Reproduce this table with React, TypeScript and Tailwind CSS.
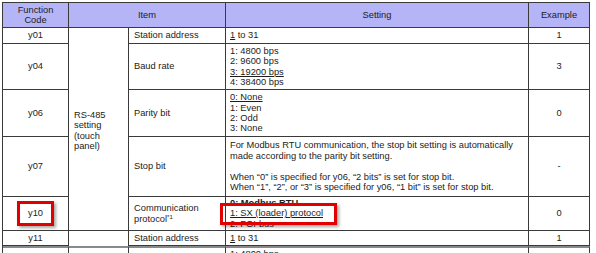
import React from "react";

// ─── Table cell helpers ──────────────────────────────────────────────────────
const cell = "border-r border-b border-[#3a3a3a] align-middle p-0";
const codeCell = `${cell} text-center`;
const itemCell = `${cell} pl-[5px] text-left`;
const settingCell = `${cell} pl-[4px] pr-1 text-left`;
const exampleCell = `${cell} text-center`;

const App = () => {
    return (
        <div
            className="w-[596px] h-[253px] overflow-hidden bg-white text-[#1c1c1c] pl-[2px] pt-[2px]"
            style={{ fontFamily: '"Liberation Sans", Arial, sans-serif' }}
        >
            <table className="table-fixed border-separate border-spacing-0 border-l border-t border-[#3a3a3a] w-[587px] text-[9.3px] leading-[10.4px]">
                <colgroup>
                    <col className="w-[66px]" />
                    <col className="w-[60px]" />
                    <col className="w-[97px]" />
                    <col className="w-[303px]" />
                    <col className="w-[61px]" />
                </colgroup>
                <thead>
                    <tr className="bg-[#b4b4f6]">
                        <th className={`${codeCell} h-[25px] font-normal`}>
                            Function
                            <br />
                            Code
                        </th>
                        <th colSpan={2} className={`${codeCell} font-normal`}>Item</th>
                        <th className={`${codeCell} font-normal`}>Setting</th>
                        <th className={`${codeCell} font-normal`}>Example</th>
                    </tr>
                </thead>
                <tbody>
                    <tr>
                        <td className={`${codeCell} h-[16px]`}>y01</td>
                        <td rowSpan={5} className={`${itemCell} pt-[3px]`}>
                            RS-485
                            <br />
                            setting
                            <br />
                            (touch
                            <br />
                            panel)
                        </td>
                        <td className={itemCell}>Station address</td>
                        <td className={settingCell}>
                            <span className="underline">1</span> to 31
                        </td>
                        <td className={exampleCell}>1</td>
                    </tr>
                    <tr>
                        <td className={`${codeCell} h-[46px]`}>y04</td>
                        <td className={itemCell}>Baud rate</td>
                        <td className={settingCell}>
                            1: 4800 bps
                            <br />
                            2: 9600 bps
                            <br />
                            <span className="underline">3: 19200 bps</span>
                            <br />
                            4: 38400 bps
                        </td>
                        <td className={exampleCell}>3</td>
                    </tr>
                    <tr>
                        <td className={`${codeCell} h-[47px]`}>y06</td>
                        <td className={itemCell}>Parity bit</td>
                        <td className={settingCell}>
                            <span className="underline">0: None</span>
                            <br />
                            1: Even
                            <br />
                            2: Odd
                            <br />
                            3: None
                        </td>
                        <td className={exampleCell}>0</td>
                    </tr>
                    <tr>
                        <td className={`${codeCell} h-[60px]`}>y07</td>
                        <td className={itemCell}>Stop bit</td>
                        <td className={settingCell}>
                            For Modbus RTU communication, the stop bit setting is automatically
                            <br />
                            made according to the parity bit setting.
                            <br />
                            <br />
                            When “0” is specified for y06, “2 bits” is set for stop bit.
                            <br />
                            When “1”, “2”, or “3” is specified for y06, “1 bit” is set for stop bit.
                        </td>
                        <td className={exampleCell}>-</td>
                    </tr>
                    <tr>
                        <td className={`${codeCell} h-[34px] relative`}>
                            y10
                            {/* red annotation box */}
                            <div className="absolute left-[14px] top-[4px] w-[37px] h-[25px] border-[3px] border-[#e10000] shadow-[2px_2px_3px_rgba(0,0,0,0.35)]" />
                        </td>
                        <td className={itemCell}>
                            Communication
                            <br />
                            protocol
                            <span className="relative -top-[3px] text-[6px] leading-none">*1</span>
                        </td>
                        <td className={`${settingCell} relative`}>
                            <span className="font-bold">0: Modbus RTU</span>
                            <br />
                            <span className="underline">1: SX (loader) protocol</span>
                            <br />
                            2: FGI-bus
                            {/* red annotation box */}
                            <div className="absolute left-[-6px] top-[6px] w-[117px] h-[22px] border-[3px] border-[#e10000] shadow-[2px_2px_3px_rgba(0,0,0,0.35)]" />
                        </td>
                        <td className={exampleCell}>0</td>
                    </tr>
                    <tr>
                        <td className={`${codeCell} h-[15px]`}>y11</td>
                        <td className={`${cell} border-b-0`} />
                        <td className={itemCell}>Station address</td>
                        <td className={settingCell}>
                            <span className="underline">1</span> to 31
                        </td>
                        <td className={exampleCell}>1</td>
                    </tr>
                    <tr>
                        <td className={`${codeCell} h-[30px] border-t-2 border-t-[#8a8a8a]`} />
                        <td className={`${cell} border-t-2 border-t-[#8a8a8a]`} />
                        <td className={`${itemCell} border-t-2 border-t-[#8a8a8a]`} />
                        <td className={`${settingCell} align-top pt-[1px] border-t-2 border-t-[#8a8a8a]`}>
                            1: 4800 bps
                        </td>
                        <td className={`${exampleCell} border-t-2 border-t-[#8a8a8a]`} />
                    </tr>
                </tbody>
            </table>
        </div>
    );
};

export default App;
